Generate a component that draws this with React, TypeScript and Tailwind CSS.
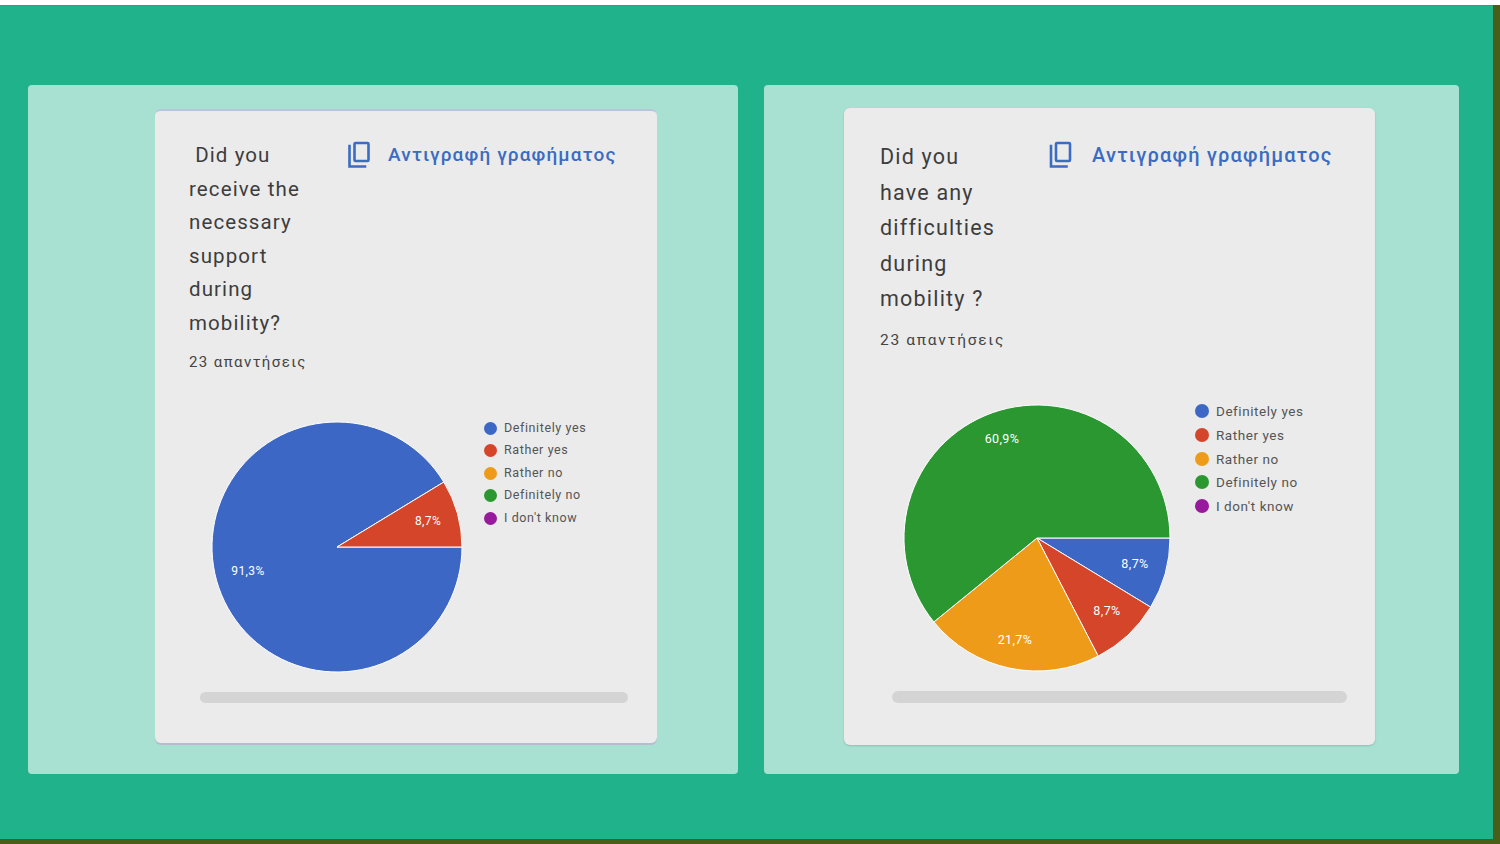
import React from "react";

const FONT = { fontFamily: "Roboto, 'Noto Sans', 'Liberation Sans', sans-serif" };

const LEGEND = [
  { label: "Definitely yes", color: "#3d67c4" },
  { label: "Rather yes", color: "#d5452a" },
  { label: "Rather no", color: "#ee9b1a" },
  { label: "Definitely no", color: "#2a9731" },
  { label: "I don't know", color: "#981a9c" },
];

function CopyIcon({ className }: { className?: string }) {
  return (
    <svg viewBox="0 0 24 28" className={className} fill="none" stroke="#3a6cc2" strokeWidth="2.6">
      <rect x="7.5" y="2" width="14" height="18" rx="1" />
      <path d="M2.5 5 V25.5 H18" strokeLinecap="square" />
    </svg>
  );
}

function Legend({ itemH, dot, text }: { itemH: string; dot: string; text: string }) {
  return (
    <div className="flex flex-col">
      {LEGEND.map((l) => (
        <div key={l.label} className={`flex items-center ${itemH}`}>
          <span className={`rounded-full ${dot}`} style={{ backgroundColor: l.color }} />
          <span className={`text-[#555] ${text}`}>{l.label}</span>
        </div>
      ))}
    </div>
  );
}

function PieLeft() {
  return (
    <svg width="260" height="260" viewBox="0 0 260 260" className="shrink-0">
      <path d="M130 130 L236.8 65.05 A125 125 0 1 0 255 130 Z" fill="#3d67c4" stroke="#fff" strokeWidth="1" />
      <path d="M130 130 L255 130 A125 125 0 0 0 236.8 65.05 Z" fill="#d5452a" stroke="#fff" strokeWidth="1" />
      <g fill="#fff" fontSize="12" fontFamily="Roboto, 'Liberation Sans', sans-serif" textAnchor="middle" dominantBaseline="middle" letterSpacing="0.4">
        <text x="221" y="105">8,7%</text>
        <text x="41" y="155">91,3%</text>
      </g>
    </svg>
  );
}

function PieRight() {
  return (
    <svg width="276" height="276" viewBox="0 0 276 276" className="shrink-0">
      <path d="M138 138 L271 138 A133 133 0 0 1 251.64 207.11 Z" fill="#3d67c4" stroke="#fff" strokeWidth="1" />
      <path d="M138 138 L251.64 207.11 A133 133 0 0 1 199.19 256.09 Z" fill="#d5452a" stroke="#fff" strokeWidth="1" />
      <path d="M138 138 L199.19 256.09 A133 133 0 0 1 34.83 221.94 Z" fill="#ee9b1a" stroke="#fff" strokeWidth="1" />
      <path d="M138 138 L34.83 221.94 A133 133 0 1 1 271 138 Z" fill="#2a9731" stroke="#fff" strokeWidth="1" />
      <g fill="#fff" fontSize="12.5" fontFamily="Roboto, 'Liberation Sans', sans-serif" textAnchor="middle" dominantBaseline="middle" letterSpacing="0.4">
        <text x="103" y="40">60,9%</text>
        <text x="236" y="165">8,7%</text>
        <text x="208" y="212">8,7%</text>
        <text x="116" y="241">21,7%</text>
      </g>
    </svg>
  );
}

export default function App() {
  return (
    <div className="w-[1500px] h-[844px] flex flex-col bg-[#4b5e19] overflow-hidden" style={FONT}>
      <div className="h-[5px] bg-white shrink-0" />
      <div className="flex flex-1 min-h-0">
        <div className="w-[1493px] bg-[#20b38b] border-t border-[#3c9a80] flex gap-[26px] pl-[28px] pt-[79px]">
          {/* Left panel */}
          <div className="w-[710px] h-[689px] bg-[#a8e0d2] rounded-sm pl-[127px] pt-[24px]">
            <div className="w-[502px] h-[634px] bg-[#ebebeb] rounded-md border-t-2 border-[#b7c5dc] shadow-[0_2px_0_#b3bfd0] pl-[34px] pt-[28px] flex flex-col">
              <div className="flex">
                <div className="w-[158px] text-[20.5px] leading-[33.5px] tracking-[1.1px] text-[#3d3d3d]">
                  <div>&nbsp;Did you</div>
                  <div>receive the</div>
                  <div>necessary</div>
                  <div>support</div>
                  <div>during</div>
                  <div>mobility?</div>
                </div>
                <div className="flex items-center mt-[2px] h-[28px]">
                  <CopyIcon className="w-[24px] h-[28px]" />
                  <span className="ml-[17px] text-[19px] font-medium text-[#3a6cc2] tracking-[1.15px] whitespace-nowrap">Αντιγραφή γραφήματος</span>
                </div>
              </div>
              <div className="mt-[12px] text-[15px] leading-[20px] tracking-[1.4px] text-[#444]">23 απαντήσεις</div>
              <div className="flex mt-[45px] ml-[18px]">
                <PieLeft />
                <div className="ml-[17px]">
                  <Legend itemH="h-[22.5px]" dot="w-[13px] h-[13px] mr-[7px]" text="text-[12.5px] tracking-[0.6px]" />
                </div>
              </div>
              <div className="mt-[15px] ml-[11px] w-[428px] h-[11px] rounded-full bg-[#d4d4d4]" />
            </div>
          </div>

          {/* Right panel */}
          <div className="w-[695px] h-[689px] bg-[#a8e0d2] rounded-sm pl-[80px] pt-[23px]">
            <div className="w-[531px] h-[637px] bg-[#ebebeb] rounded-md shadow-[0_1px_2px_rgba(0,0,0,0.15)] pl-[36px] pt-[31px] flex flex-col">
              <div className="flex">
                <div className="w-[168px] text-[21.5px] leading-[35.5px] tracking-[1.2px] text-[#3d3d3d]">
                  <div>Did you</div>
                  <div>have any</div>
                  <div>difficulties</div>
                  <div>during</div>
                  <div>mobility ?</div>
                </div>
                <div className="flex items-center mt-[2px] h-[28px]">
                  <CopyIcon className="w-[25px] h-[28px]" />
                  <span className="ml-[19px] text-[20px] font-medium text-[#3a6cc2] tracking-[1.2px] whitespace-nowrap">Αντιγραφή γραφήματος</span>
                </div>
              </div>
              <div className="mt-[13px] text-[15.5px] leading-[20px] tracking-[1.7px] text-[#444]">23 απαντήσεις</div>
              <div className="flex mt-[50px] ml-[19px]">
                <PieRight />
                <div className="ml-[20px]">
                  <Legend itemH="h-[23.7px]" dot="w-[14px] h-[14px] mr-[7px]" text="text-[13.5px] tracking-[0.55px]" />
                </div>
              </div>
              <div className="mt-[15px] ml-[12px] w-[455px] h-[12px] rounded-full bg-[#d4d4d4]" />
            </div>
          </div>
        </div>
        <div className="flex-1" />
      </div>
      <div className="h-[5px] shrink-0" />
    </div>
  );
}
